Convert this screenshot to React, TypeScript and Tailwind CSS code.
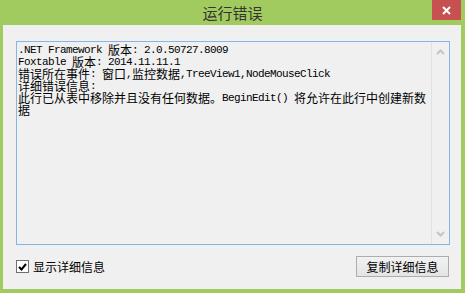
import React from "react";

const M = ({ children }: { children: React.ReactNode }) => (
  <span className="whitespace-pre text-[11px] leading-[12px] tracking-[-0.6px] [font-family:'Liberation_Mono',monospace]">{children}</span>
);
const C = ({ children }: { children: React.ReactNode }) => (
  <span className="whitespace-pre text-[12px] leading-[12px] [font-family:'Noto_Sans_CJK_SC',sans-serif]">{children}</span>
);

const Chevron = ({ up }: { up: boolean }) => (
  <svg width="9" height="6" viewBox="0 0 9 6">
    <path d={up ? "M1 5 L4.5 1.5 L8 5" : "M1 1 L4.5 4.5 L8 1"} fill="none" stroke="#c4c4c4" strokeWidth="2" />
  </svg>
);

export default function App() {
  return (
    <div className="w-[465px] h-[293px] bg-[#a2cb5f] flex flex-col overflow-hidden">
      <div className="relative h-[25px] shrink-0 flex items-center justify-center">
        <span className="text-[15px] leading-none text-[#333] mt-[-1px] [font-family:'Noto_Sans_CJK_SC',sans-serif]">运行错误</span>
        <div className="absolute top-0 right-[4px] w-[29px] h-[20px] bg-[#c75050] flex items-center justify-center">
          <svg width="9" height="9" viewBox="0 0 9 9">
            <path d="M1 1 L8 8 M8 1 L1 8" stroke="#fff" strokeWidth="2" />
          </svg>
        </div>
      </div>
      <div className="flex-1 ml-[3px] mr-[4px] mb-[4px] bg-[#f0f0f0] flex flex-col pt-[16px] pl-[13px] pr-[11px]">
        <div className="h-[204px] border border-[#84b6e8] bg-[#f0f0f0] flex">
          <div className="flex-1 pt-[2px] pl-[1px] text-black leading-[12px] whitespace-nowrap overflow-hidden">
            <div className="h-[12px] flex items-center"><M>.NET Framework </M><C>版本</C><M>: 2.0.50727.8009</M></div>
            <div className="h-[12px] flex items-center"><M>Foxtable </M><C>版本</C><M>: 2014.11.11.1</M></div>
            <div className="h-[12px] flex items-center"><C>错误所在事件</C><M>: </M><C>窗口</C><M>,</M><C>监控数据</C><M>,TreeView1,NodeMouseClick</M></div>
            <div className="h-[12px] flex items-center"><C>详细错误信息</C><M>:</M></div>
            <div className="h-[12px] flex items-center"><C>此行已从表中移除并且没有任何数据。</C><M>BeginEdit() </M><C>将允许在此行中创建新数</C></div>
            <div className="h-[12px] flex items-center"><C>据</C></div>
          </div>
          <div className="w-[18px] border-l border-[#e2e2e2] flex flex-col justify-between items-center py-[7px]">
            <Chevron up />
            <Chevron up={false} />
          </div>
        </div>
        <div className="flex items-center justify-between mt-[11px] h-[21px]">
          <div className="flex items-center gap-[4px]">
            <div className="w-[13px] h-[13px] border border-[#707070] bg-white flex items-center justify-center">
              <svg width="9" height="8" viewBox="0 0 9 8">
                <path d="M1 4 L3.5 6.5 L8 1" fill="none" stroke="#000" strokeWidth="2" />
              </svg>
            </div>
            <span className="text-[12px] leading-[13px] text-black [font-family:'Noto_Sans_CJK_SC',sans-serif]">显示详细信息</span>
          </div>
          <div className="w-[93px] h-[21px] mr-[1px] border border-[#adadad] bg-gradient-to-b from-[#f2f2f2] to-[#e4e4e4] flex items-center justify-center">
            <span className="text-[12px] leading-[13px] text-black [font-family:'Noto_Sans_CJK_SC',sans-serif]">复制详细信息</span>
          </div>
        </div>
      </div>
    </div>
  );
}
